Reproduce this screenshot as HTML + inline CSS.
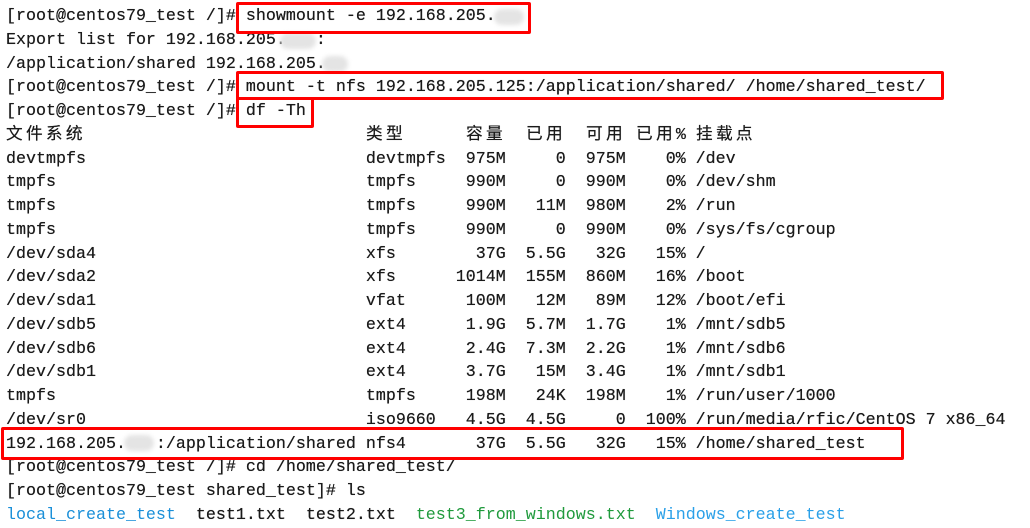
<!DOCTYPE html>
<html><head><meta charset="utf-8"><style>
html,body{margin:0;padding:0;background:#fff;width:1030px;height:527px;overflow:hidden;}
.t{position:absolute;left:6px;top:5px;font-family:"Liberation Mono","Noto Sans CJK SC",monospace;font-size:16.67px;line-height:23.76px;color:#1a1a1a;text-shadow:0 0 0.4px #1a1a1a;}
.r{position:relative;height:23.76px;white-space:pre;}
.r span.a{position:absolute;top:0;}
.c{letter-spacing:3.3px;}
.box{position:absolute;border:3px solid #f00;box-sizing:border-box;border-radius:2px;}
.blur{position:absolute;background:#e4e4e4;border-radius:8px;filter:blur(2px);}
.b1{color:#1a8fd8;text-shadow:none}.g{color:#1f9a3c;text-shadow:none}.b2{color:#2aa0e8;text-shadow:none}
</style></head><body>
<div class="t"><div class="r">[root@centos79_test /]# showmount -e 192.168.205.</div><div class="r">Export list for 192.168.205.   :</div><div class="r">/application/shared 192.168.205.</div><div class="r">[root@centos79_test /]# mount -t nfs 192.168.205.125:/application/shared/ /home/shared_test/</div><div class="r">[root@centos79_test /]# df -Th</div><div class="r c"><span class="a" style="left:0">文件系统</span><span class="a" style="left:360px">类型</span><span class="a" style="left:460px">容量</span><span class="a" style="left:520px">已用</span><span class="a" style="left:580px">可用</span><span class="a" style="left:630px">已用%</span><span class="a" style="left:690px">挂载点</span></div><div class="r">devtmpfs                            devtmpfs  975M     0  975M    0% /dev</div><div class="r">tmpfs                               tmpfs     990M     0  990M    0% /dev/shm</div><div class="r">tmpfs                               tmpfs     990M   11M  980M    2% /run</div><div class="r">tmpfs                               tmpfs     990M     0  990M    0% /sys/fs/cgroup</div><div class="r">/dev/sda4                           xfs        37G  5.5G   32G   15% /</div><div class="r">/dev/sda2                           xfs      1014M  155M  860M   16% /boot</div><div class="r">/dev/sda1                           vfat      100M   12M   89M   12% /boot/efi</div><div class="r">/dev/sdb5                           ext4      1.9G  5.7M  1.7G    1% /mnt/sdb5</div><div class="r">/dev/sdb6                           ext4      2.4G  7.3M  2.2G    1% /mnt/sdb6</div><div class="r">/dev/sdb1                           ext4      3.7G   15M  3.4G    1% /mnt/sdb1</div><div class="r">tmpfs                               tmpfs     198M   24K  198M    1% /run/user/1000</div><div class="r">/dev/sr0                            iso9660   4.5G  4.5G     0  100% /run/media/rfic/CentOS 7 x86_64</div><div class="r">192.168.205.   :/application/shared nfs4       37G  5.5G   32G   15% /home/shared_test</div><div class="r">[root@centos79_test /]# cd /home/shared_test/</div><div class="r">[root@centos79_test shared_test]# ls</div><div class="r"><span class="b1">local_create_test</span>  test1.txt  test2.txt  <span class="g">test3_from_windows.txt</span>  <span class="b2">Windows_create_test</span></div></div>
<div class="blur" style="left:494px;top:9px;width:30px;height:16px"></div>
<div class="blur" style="left:280px;top:33px;width:36px;height:16px"></div>
<div class="blur" style="left:322px;top:56px;width:26px;height:16px"></div>
<div class="blur" style="left:124px;top:435px;width:30px;height:16px"></div>
<div class="box" style="left:236px;top:2px;width:295px;height:32px"></div>
<div class="box" style="left:236px;top:71px;width:708px;height:29px"></div>
<div class="box" style="left:236px;top:97px;width:78px;height:31px"></div>
<div class="box" style="left:1px;top:427px;width:903px;height:33px"></div>
</body></html>
